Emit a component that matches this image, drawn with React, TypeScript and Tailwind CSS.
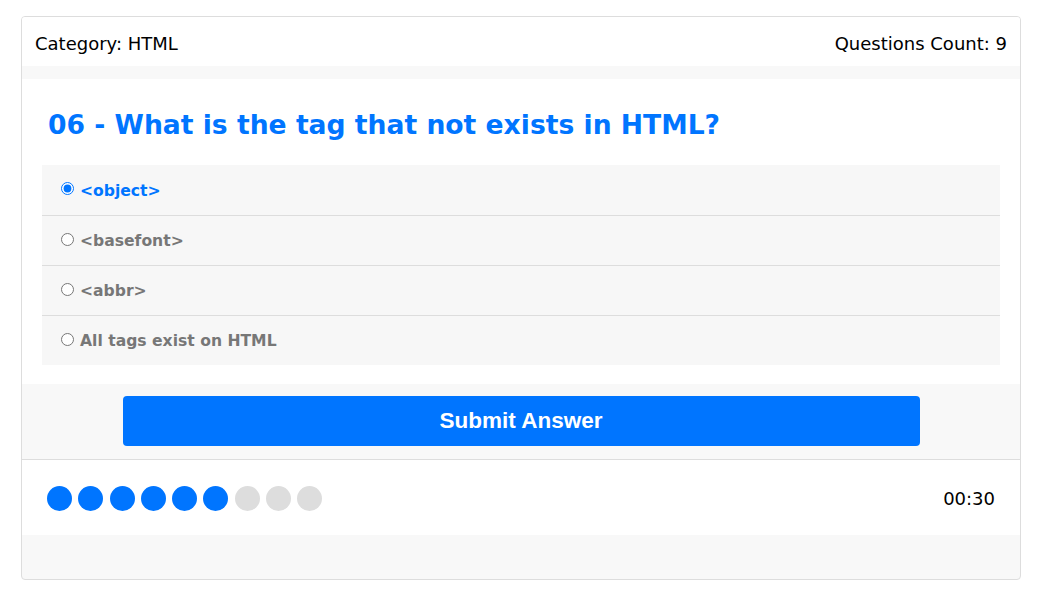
import React from "react";

const answers = ["<object>", "<basefont>", "<abbr>", "All tags exist on HTML"];

export default function App() {
  const [checked, setChecked] = React.useState(0);
  const done = 6;

  return (
    <div className="bg-white min-h-[602px] pt-4 px-[21px] font-['DejaVu_Sans',sans-serif]">
      <div className="w-[1000px] border border-[#ddd] rounded-[4px] bg-[#f8f8f8] overflow-hidden">
        {/* info bar */}
        <div className="bg-white h-[49px] px-[13px] pt-[4px] flex items-center justify-between text-[18px] text-black">
          <span>Category: HTML</span>
          <span>Questions Count: 9</span>
        </div>

        {/* question */}
        <div className="mt-[13px] bg-white px-5 pt-[22px] pb-[19px]">
          <h2 className="text-[#0075ff] font-bold text-[26.6px] leading-[48px] pl-[6px] mb-[16px]">
            06 - What is the tag that not exists in HTML?
          </h2>
          <div className="bg-[#f7f7f7]">
            {answers.map((value, index) => (
              <label
                key={index}
                className={
                  "flex items-center h-[50px] px-5 gap-[6px] cursor-pointer " +
                  (index > 0 ? "border-t border-[#ddd]" : "")
                }
              >
                <input
                  type="radio"
                  name="answer"
                  checked={checked === index}
                  onChange={() => setChecked(index)}
                  className="w-[13px] h-[13px] -mt-[3px] -ml-[1px] accent-[#0075ff]"
                />
                <span
                  className={
                    "font-bold text-[15.6px] pt-[3px] " +
                    (checked === index ? "text-[#0075ff]" : "text-[#777]")
                  }
                >
                  {value}
                </span>
              </label>
            ))}
          </div>
        </div>

        {/* submit */}
        <div className="h-[76px] pb-[1px] flex items-center justify-center border-b border-[#ddd]">
          <button className="w-[797px] h-[50px] rounded-[4px] bg-[#0075ff] text-white font-bold text-[22.5px] font-['Liberation_Sans',sans-serif]">
            Submit Answer
          </button>
        </div>

        {/* bullets + timer */}
        <div className="bg-white h-[75px] px-[25px] pt-[2px] flex items-center justify-between">
          <div className="flex gap-[6.25px]">
            {Array.from({ length: 9 }).map((_, i) => (
              <span
                key={i}
                className={
                  "w-[25px] h-[25px] rounded-full " +
                  (i < done ? "bg-[#0075ff]" : "bg-[#ddd]")
                }
              />
            ))}
          </div>
          <span className="text-[18px] text-black">00:30</span>
        </div>
        <div className="h-[44px]" />
      </div>
    </div>
  );
}
